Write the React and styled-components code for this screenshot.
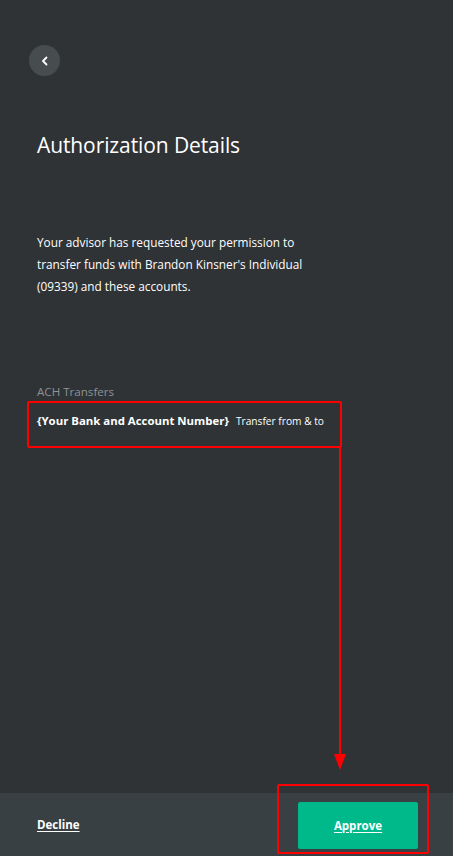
import React from "react";
import styled, { createGlobalStyle } from "styled-components";

const GlobalStyle = createGlobalStyle`
  html, body {
    margin: 0;
    padding: 0;
    background: #2f3336;
  }
  body {
    font-family: "Open Sans", "Noto Sans", sans-serif;
  }
`;

const Page = styled.div`
  position: relative;
  width: 453px;
  height: 856px;
  display: flex;
  flex-direction: column;
  background: #2f3336;
  color: #fff;
  overflow: hidden;
`;

const Main = styled.div`
  flex: 1;
  padding: 45px 37px 0;
  display: flex;
  flex-direction: column;
`;

const BackButton = styled.button`
  width: 31px;
  height: 31px;
  margin-left: -8px;
  border-radius: 50%;
  border: none;
  background: #474c4f;
  color: #fff;
  display: flex;
  align-items: center;
  justify-content: center;
  padding: 0;
  cursor: pointer;
`;

const Title = styled.h1`
  margin: 55px 0 0;
  font-size: 21px;
  font-weight: 400;
  line-height: 28px;
  letter-spacing: -0.1px;
`;

const Intro = styled.p`
  margin: 72px 0 0;
  font-size: 11.8px;
  line-height: 22px;
  max-width: 278px;
`;

const SectionLabel = styled.div`
  margin-top: 86px;
  font-size: 11.6px;
  line-height: 18px;
  color: #8d9295;
`;

const AccountRow = styled.div`
  margin-top: 12px;
  display: flex;
  align-items: baseline;
  gap: 7px;
`;

const AccountName = styled.span`
  font-size: 11.4px;
  font-weight: 700;
`;

const AccountNote = styled.span`
  font-size: 10.2px;
`;

const Footer = styled.div`
  height: 63px;
  background: #394043;
  display: flex;
  align-items: center;
  justify-content: space-between;
  padding: 0 35px 0 37px;
`;

const LinkButton = styled.button`
  border: none;
  background: ${(p) => (p.primary ? "#00b98b" : "transparent")};
  color: #fff;
  font-family: inherit;
  font-size: 11.5px;
  font-weight: 700;
  text-decoration: underline;
  text-underline-offset: 2px;
  padding: 0;
  width: ${(p) => (p.primary ? "120px" : "auto")};
  height: ${(p) => (p.primary ? "47px" : "auto")};
  margin-top: ${(p) => (p.primary ? "2px" : "0")};
  border-radius: 2px;
  cursor: pointer;
`;

// red annotation marks drawn over the screenshot
const Highlight = styled.div`
  position: absolute;
  border: 2px solid #f00;
  border-radius: 2px;
  box-sizing: border-box;
  pointer-events: none;
`;

const ArrowLayer = styled.svg`
  position: absolute;
  left: 0;
  top: 0;
  pointer-events: none;
`;

const App = () => (
  <>
    <GlobalStyle />
    <Page>
      <Main>
        <BackButton aria-label="Back">
          <svg width="12" height="12" viewBox="0 0 12 12">
            <path
              d="M7.5 2.5 L4 6 L7.5 9.5"
              fill="none"
              stroke="#fff"
              strokeWidth="1.8"
              strokeLinecap="round"
              strokeLinejoin="round"
            />
          </svg>
        </BackButton>
        <Title>Authorization Details</Title>
        <Intro>
          Your advisor has requested your permission to transfer funds with
          Brandon Kinsner's Individual (09339) and these accounts.
        </Intro>
        <SectionLabel>ACH Transfers</SectionLabel>
        <AccountRow>
          <AccountName>{"{Your Bank and Account Number}"}</AccountName>
          <AccountNote>Transfer from &amp; to</AccountNote>
        </AccountRow>
      </Main>
      <Footer>
        <LinkButton>Decline</LinkButton>
        <LinkButton primary>Approve</LinkButton>
      </Footer>

      <Highlight style={{ left: 27, top: 401, width: 315, height: 47 }} />
      <Highlight style={{ left: 277, top: 784, width: 152, height: 70 }} />
      <ArrowLayer width="453" height="856">
        <line x1="340" y1="447" x2="340" y2="758" stroke="#f00" strokeWidth="2" />
        <polygon points="334,754 346,754 340,770" fill="#f00" />
      </ArrowLayer>
    </Page>
  </>
);

export default App;
